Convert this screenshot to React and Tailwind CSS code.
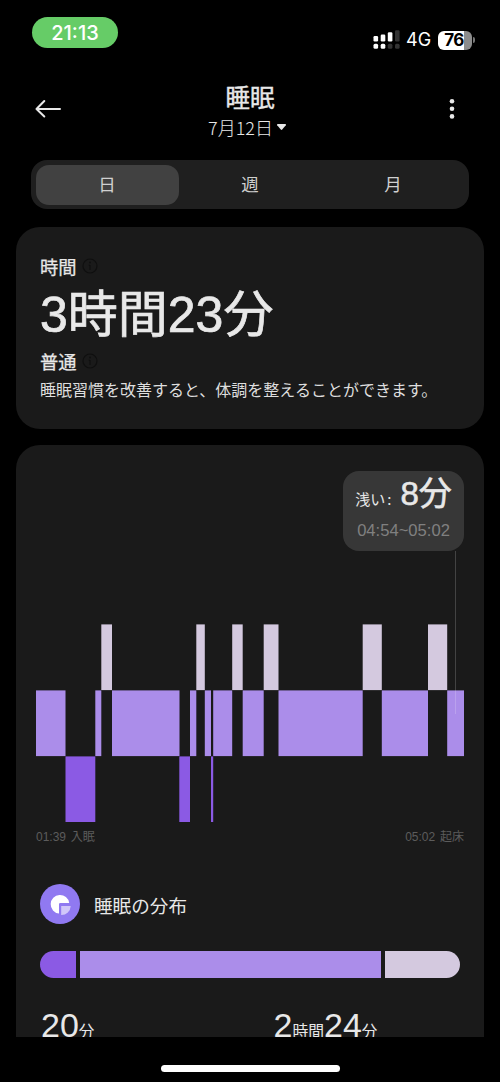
import { useState } from "react";

const STAGE_STYLE = {
  awake: { y: 0, color: "#d4c9df" },
  light: { y: 66, color: "#ab8dea" },
  deep: { y: 132, color: "#8b5ae4" },
};

const stages = [
  { type: "light", from: 0, to: 29.5 },
  { type: "deep", from: 29.5, to: 59.3 },
  { type: "light", from: 59.3, to: 65.3 },
  { type: "awake", from: 65.3, to: 76 },
  { type: "light", from: 76, to: 143.5 },
  { type: "deep", from: 143.3, to: 154 },
  { type: "light", from: 154, to: 160.3 },
  { type: "awake", from: 160.3, to: 168.8 },
  { type: "light", from: 168.8, to: 175 },
  { type: "deep", from: 175, to: 177.2 },
  { type: "light", from: 177.2, to: 196.2 },
  { type: "awake", from: 196.2, to: 206.7 },
  { type: "light", from: 206.7, to: 227.7 },
  { type: "awake", from: 227.7, to: 242.5 },
  { type: "light", from: 242.5, to: 326.7 },
  { type: "awake", from: 326.7, to: 345.8 },
  { type: "light", from: 345.8, to: 392 },
  { type: "awake", from: 392, to: 411.2 },
  { type: "light", from: 411.2, to: 428 },
];

function StatusBar() {
  return (
    <div className="flex h-[64px] items-start justify-between pl-8 pr-[25px]">
      <div className="mt-[17px] flex h-[31px] w-[86px] items-center justify-center rounded-full bg-[#66cc67] pt-px font-['Inter',sans-serif] text-[20px] font-medium leading-none text-white">
        21:13
      </div>
      <div className="mt-[30px] flex h-[20px] items-center">
        <svg width="27" height="20" viewBox="0 0 27 20" fill="#fff">
          <rect x="0.5" y="6" width="4.6" height="5.4" rx="1.2" />
          <rect x="7.7" y="4.6" width="4.6" height="6.8" rx="1.2" />
          <rect x="14.8" y="2.2" width="4.6" height="9.2" rx="1.2" />
          <rect x="22" y="0.3" width="4.6" height="11.1" rx="1.2" fill="#333" />
          <rect x="0.5" y="13.8" width="4.6" height="5" rx="1.5" />
          <rect x="7.7" y="13.8" width="4.6" height="5" rx="1.5" />
          <rect x="14.8" y="13.8" width="4.6" height="5" rx="1.5" fill="#333" />
          <rect x="22" y="13.8" width="4.6" height="5" rx="1.5" fill="#333" />
        </svg>
        <span className="ml-[6px] w-[25px] whitespace-nowrap font-['Inter',sans-serif] text-[18px] leading-none text-white">4G</span>
        <div className="ml-[7px] flex h-[19px] w-[34px] items-center justify-center rounded-[6px] bg-linear-to-r from-white from-76% to-[#8c8c8c] to-76% pr-0.5 font-['Inter',sans-serif] text-[17px] font-bold leading-none tracking-[-0.5px] text-black">
          76
        </div>
        <div className="ml-px h-[6px] w-[2px] rounded-r-full bg-[#777]" />
      </div>
    </div>
  );
}

function Header() {
  return (
    <div className="flex h-[96px] items-start justify-between px-[35px]">
      <svg className="mt-[35px]" width="27" height="20" viewBox="0 0 27 20" fill="none" stroke="#e8e8e8" strokeWidth="2" strokeLinecap="round" strokeLinejoin="round">
        <path d="M25 10H1.5M9.3 2L1.5 10l7.8 7.5" />
      </svg>
      <div className="flex flex-col items-center text-[#e8e8e8]">
        <h1 className="mt-[20px] text-[24.5px] leading-[26px] font-normal [-webkit-text-stroke:0.4px_#e8e8e8]">睡眠</h1>
        <div className="mt-[5px] mr-[5px] flex items-center text-[18px] font-light leading-[24px]">
          7月12日
          <svg className="ml-[3px]" width="11" height="8" viewBox="0 0 11 8" fill="#e8e8e8">
            <path d="M1.6 1h7.8q1 0.3 0.4 1.2L6.2 6.6q-0.7 0.7-1.4 0L1.2 2.2Q0.6 1.3 1.6 1z" />
          </svg>
        </div>
      </div>
      <div className="mt-[34px] flex w-[27px] justify-end pr-[10px]">
        <svg width="6" height="22" viewBox="0 0 6 22" fill="#e8e8e8">
          <circle cx="3" cy="3.3" r="2.3" />
          <circle cx="3" cy="10.8" r="2.3" />
          <circle cx="3" cy="18.4" r="2.3" />
        </svg>
      </div>
    </div>
  );
}

function Tabs() {
  const [active, setActive] = useState("日");
  return (
    <div className="mx-[31px] flex h-[49px] rounded-[16px] bg-[#1f1f1f] p-[4.5px]">
      {["日", "週", "月"].map((tab) => (
        <button
          key={tab}
          onClick={() => setActive(tab)}
          className={`flex-1 rounded-[13px] pb-0.5 text-[17.5px] leading-none text-[#d0d0d0] ${active === tab ? "bg-[#414141]" : ""}`}
        >
          {tab}
        </button>
      ))}
    </div>
  );
}

function InfoIcon() {
  return (
    <svg width="16" height="16" viewBox="0 0 16 16" fill="none" stroke="#0f0f0f" strokeWidth="1.2">
      <circle cx="8" cy="8" r="7" />
      <path d="M8 7v5M6.8 7.3H8" />
      <circle cx="8" cy="4.6" r="0.4" />
    </svg>
  );
}

function DurationCard() {
  return (
    <div className="mx-4 mt-[17.5px] h-[202px] rounded-[24px] bg-[#1a1a1a] px-6 pt-[29.5px] text-[#e8e8e8]">
      <div className="flex h-[20px] items-center gap-[5px] text-[18.3px] leading-none [-webkit-text-stroke:0.25px_#e8e8e8]">
        時間 <InfoIcon />
      </div>
      <div className="mt-[13px] h-[52px] whitespace-nowrap font-['Liberation_Sans','Noto_Sans_CJK_JP',sans-serif] text-[50px] leading-[52px] [-webkit-text-stroke:0.7px_#e8e8e8]">
        3時間23分
      </div>
      <div className="mt-[10px] flex h-[20px] items-center gap-[5px] text-[18.3px] leading-none [-webkit-text-stroke:0.25px_#e8e8e8]">
        普通 <InfoIcon />
      </div>
      <p className="mt-[7px] whitespace-nowrap text-[16px] leading-[22px] text-[#dedede]">睡眠習慣を改善すると、体調を整えることができます。</p>
    </div>
  );
}

function SleepChart() {
  return (
    <svg className="block" width="428" height="271" viewBox="0 0 428 271">
      {stages.map((s) => (
        <rect
          key={s.from}
          x={s.from}
          y={73.4 + STAGE_STYLE[s.type].y}
          width={s.to - s.from}
          height="65.7"
          fill={STAGE_STYLE[s.type].color}
        />
      ))}
      {/* cursor line under the tooltip */}
      <rect x="419" y="0" width="1" height="163" fill="#fff" fillOpacity="0.18" />
    </svg>
  );
}

function Distribution() {
  return (
    <div className="px-1">
      <div className="flex h-[40px] items-center gap-[14px]">
        <svg width="40" height="40" viewBox="0 0 40 40">
          <circle cx="20" cy="20" r="20" fill="#9079f1" />
          <path d="M19 29.5A9.3 9.3 0 1 1 29.2 19H20.2Q19 19 19 20.2z" fill="#fff" />
          <path d="M21.2 22h9.5a9.3 9.3 0 0 1-9.5 9z" fill="#d1c7f9" />
        </svg>
        <h2 className="pt-0.5 text-[18.6px] font-normal leading-none text-[#e8e8e8]">睡眠の分布</h2>
      </div>
      <div className="mt-[27px] flex h-[27px] gap-[3.5px] overflow-hidden rounded-full">
        <div className="w-[36px] bg-[#8b5ae4]" />
        <div className="w-[301.5px] bg-[#ab8dea]" />
        <div className="flex-1 bg-[#d4c9df]" />
      </div>
      <div className="mt-[27px] flex font-['Liberation_Sans','Noto_Sans_CJK_JP',sans-serif] text-[34px] leading-[40px] text-[#e8e8e8]">
        <div className="w-[233.5px] pl-px">
          20<span className="text-[15.5px]">分</span>
        </div>
        <div className="whitespace-nowrap">
          2<span className="text-[15.8px]">時間</span>24<span className="text-[15.5px]">分</span>
        </div>
      </div>
    </div>
  );
}

function StageCard() {
  return (
    <div className="mx-4 mt-4 h-[592px] overflow-hidden rounded-t-[24px] bg-[#1a1a1a] px-5 pt-[26.5px]">
      <div className="ml-auto h-[80px] w-[121px] rounded-[16px] bg-[#373737] pt-[6px]">
        <div className="flex h-[36px] items-baseline justify-center whitespace-nowrap text-[#e8e8e8]">
          <span className="text-[15px] leading-none">浅い<span className="ml-[2px]">:</span></span>
          <span className="ml-[9px] font-['Liberation_Sans','Noto_Sans_CJK_JP',sans-serif] text-[33px] leading-[34px] [-webkit-text-stroke:0.6px_#e8e8e8]">8分</span>
        </div>
        <div className="mt-[8px] text-center font-['Liberation_Sans',sans-serif] text-[16.6px] leading-[20px] text-[#808080]">04:54~05:02</div>
      </div>
      <SleepChart />
      <div className="mt-[4.5px] flex h-[20px] items-center justify-between font-['Liberation_Sans','Noto_Sans_CJK_JP',sans-serif] text-[12px] leading-none text-[#5c5c5c] [word-spacing:1.5px]">
        <span>01:39 入眠</span>
        <span>05:02 起床</span>
      </div>
      <div className="mt-[37.5px]">
        <Distribution />
      </div>
    </div>
  );
}

export default function App() {
  return (
    <div className="flex h-[1082px] w-[500px] flex-col overflow-hidden bg-black font-['Noto_Sans_CJK_JP',sans-serif]">
      <StatusBar />
      <Header />
      <Tabs />
      <DurationCard />
      <StageCard />
      <div className="mx-auto mt-[28px] h-[7px] w-[179px] shrink-0 rounded-full bg-white" />
    </div>
  );
}
